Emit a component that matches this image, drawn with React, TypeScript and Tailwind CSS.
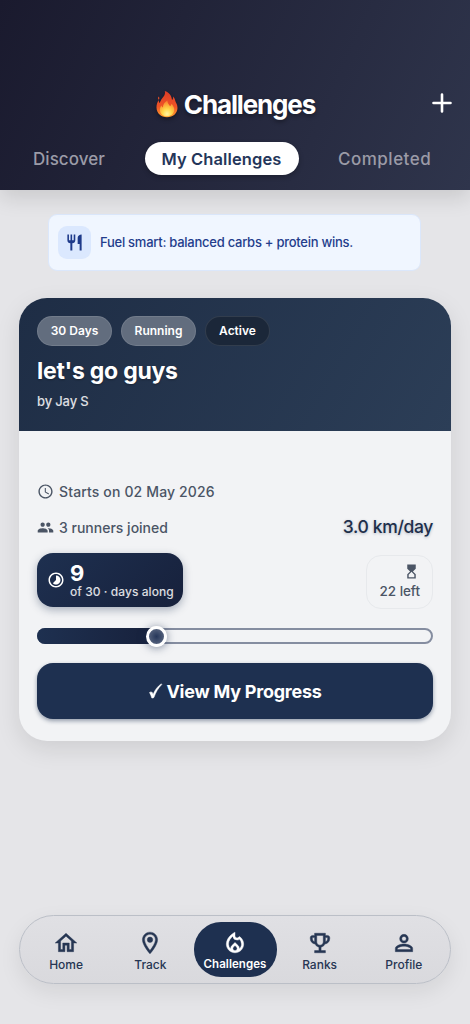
import type { ReactNode } from "react";
import {
  MdAccessTime,
  MdHourglassTop,
  MdOutlineEmojiEvents,
  MdOutlineHome,
  MdOutlineLocalFireDepartment,
  MdOutlineLocationOn,
  MdPeople,
  MdPersonOutline,
  MdRestaurant,
  MdTimelapse,
} from "react-icons/md";

function Flame() {
  return (
    <svg width="24" height="28" viewBox="0 0 24 28" className="shrink-0 drop-shadow-[0_2px_2px_rgba(0,0,0,0.4)]">
      <defs>
        <linearGradient id="outer" x1="0" y1="0" x2="0" y2="1">
          <stop offset="0" stopColor="#dc3c27" />
          <stop offset="0.6" stopColor="#ef5426" />
          <stop offset="1" stopColor="#ffa22e" />
        </linearGradient>
        <radialGradient id="inner" cx="0.5" cy="0.85" r="0.8">
          <stop offset="0" stopColor="#fff3a0" />
          <stop offset="0.4" stopColor="#ffd84a" />
          <stop offset="1" stopColor="#f9822b" />
        </radialGradient>
      </defs>
      <path
        fill="url(#outer)"
        d="M9.800 1c4 1.300 7 4.600 7.200 9 .8-.8 1.300-1.900 1-3.600 1.300 1.200 2 2.600 2.300 4.500.7 2 2.300 3.500 2.200 7.100C22.300 23.500 18 27.200 12 27.200S1.700 23.500 1.500 17.500c-.1-2.900.9-5.200 2.100-7.500.1 1.300.4 2.300 1.200 3C5.400 10.500 7 8.800 8.600 6.600 9.900 4.800 10.400 3 9.800 1z"
      />
      <path fill="#ee5128" d="M3.600 6.500c.9 1.100 1 2.200.2 3.300-.9-.9-1-2-.2-3.300z" />
      <path
        fill="url(#inner)"
        d="M12.300 10.500c.3 2.700 1.400 4.300 2.900 5.700.8-.6 1.200-1.400 1.200-2.400 2 2.100 3.100 4.100 2.800 6.500-.5 3.800-3.200 6-7.100 6s-6.900-2.300-7.200-6.100c-.1-2 .5-3.500 1.500-4.800.2 1.100.7 1.800 1.500 2.200 0-3.100 1.600-5.400 4.400-7.100z"
      />
    </svg>
  );
}

function Chip({ children, className }: { children: ReactNode; className: string }) {
  return (
    <span className={`flex h-[30px] items-center justify-center rounded-full border text-[12px] font-semibold text-white ${className}`}>
      {children}
    </span>
  );
}

function NavItem({ icon, label, active }: { icon: ReactNode; label: string; active?: boolean }) {
  return (
    <button
      className={`flex h-[55px] flex-col items-center rounded-[27px] pt-[8px] text-[12px] leading-[15px] whitespace-nowrap ${
        active ? "mx-px w-[83px] bg-[#1e3050] font-semibold text-white" : "flex-1 font-medium text-[#263653]"
      }`}
    >
      <span className="text-[26px] leading-none [&_path[fill=none]]:hidden [&_svg]:[stroke-width:0.4px]">{icon}</span>
      <span className={active ? "relative top-px tracking-[0.050px] text-[11.500px]" : "relative top-px"}>{label}</span>
    </button>
  );
}

export default function App() {
  return (
    <div className="flex h-[1024px] w-[470px] flex-col overflow-hidden bg-[#e5e5e8] font-['Inter','Liberation_Sans',sans-serif]">
      <header className="relative flex h-[190px] shrink-0 flex-col bg-linear-115 from-[#1a1a2e] to-[#2f354c] shadow-[0_8px_20px_rgba(0,0,0,0.12)]">
        <div className="mt-[84px] flex h-10 items-center justify-center">
          <div className="flex items-center gap-[5px]">
            <Flame />
            <h1 className="text-[26px] font-bold tracking-[-1.150px] text-white [text-shadow:0_2px_4px_rgba(0,0,0,0.4)]">Challenges</h1>
          </div>
          <button aria-label="Add challenge" className="absolute top-[93px] right-[18px]">
            <svg width="20" height="20" viewBox="0 0 20 20" fill="none" stroke="white" strokeWidth="2.600" strokeLinecap="round">
              <path d="M10 1.500v17M1.500 10h17" />
            </svg>
          </button>
        </div>
        <nav className="mt-[18px] flex h-[33px] items-center justify-between pr-[39px] pl-[33px] text-[17px]">
          <button className="w-[72px] pt-[2px] text-left font-medium tracking-[0.050px] whitespace-nowrap text-[#9b9ba7]">Discover</button>
          <button className="h-[33px] w-[154px] rounded-full bg-white pt-px text-[16.500px] font-semibold tracking-[0.1px] text-[#24365a] shadow-[0_2px_5px_rgba(0,0,0,0.25)]">My Challenges</button>
          <button className="w-[93px] pt-[2px] text-left font-medium tracking-[0.500px] whitespace-nowrap text-[#9b9ba7]">Completed</button>
        </nav>
      </header>

      <main className="flex flex-1 flex-col px-[19px] pt-[24px]">
        <section className="mr-[30px] ml-[29px] flex h-[57px] items-center gap-[9px] rounded-[9px] border border-[#dbe7fb] bg-[#f0f6ff] px-[9px]">
          <span className="flex size-[33px] items-center justify-center rounded-[9px] bg-[#dbe8fe] text-[19px] text-[#1e3a8a]">
            <MdRestaurant />
          </span>
          <p className="pt-px text-[13px] font-medium tracking-[-0.260px] whitespace-nowrap text-[#233d8c]">Fuel smart: balanced carbs + protein wins.</p>
        </section>

        <article className="mt-[27px] flex h-[443px] flex-col overflow-hidden rounded-[28px] bg-[#f2f3f5] shadow-[0_8px_24px_rgba(0,0,0,0.1)]">
          <div className="h-[133px] bg-linear-120 from-[#1e2d45] to-[#2c3e57] px-[18px] pt-[18px] text-white">
            <div className="flex gap-[9px]">
              <Chip className="w-[75px] border-white/10 bg-[#626d7e]">30 Days</Chip>
              <Chip className="w-[75px] border-white/10 bg-[#626d7e]">Running</Chip>
              <Chip className="w-[65px] border-white/10 bg-[#1b2739]">Active</Chip>
            </div>
            <h2 className="mt-[10px] text-[23px] leading-[30px] font-bold tracking-[-0.250px] [text-shadow:0_1px_2px_rgba(0,0,0,0.3)]">let's go guys</h2>
            <p className="mt-[6px] text-[13px] leading-[18px] font-medium tracking-[-0.150px] text-white/85">by Jay S</p>
          </div>

          <div className="flex flex-col px-[18px] pt-[50px] text-[#4b5565]">
            <div className="flex h-5 items-center gap-[5px]">
              <MdAccessTime className="size-[17px]" />
              <span className="text-[14px] font-medium tracking-[0.140px]">Starts on 02 May 2026</span>
            </div>
            <div className="mt-[14px] flex h-6 items-center gap-[5px]">
              <MdPeople className="size-[17px]" />
              <span className="text-[14px] font-medium">3 runners joined</span>
              <span className="ml-auto pt-px text-[17.500px] font-medium tracking-[-0.350px] text-[#202e4a] [text-shadow:0_1px_3px_rgba(30,48,80,0.3)]">3.0 km/day</span>
            </div>
            <div className="mt-[14px] flex justify-between">
              <div className="flex h-[54px] w-[146px] items-center gap-[5px] rounded-[16px] bg-linear-135 from-[#1e3050] to-[#17213c] pl-[10px] text-white shadow-[0_3px_9px_rgba(30,48,80,0.35)]">
                <MdTimelapse className="size-[18px] shrink-0" />
                <div className="flex flex-col">
                  <strong className="text-[22px] leading-[23px] font-bold">9</strong>
                  <span className="text-[12px] leading-[14px] font-medium tracking-[0.060px] whitespace-nowrap text-white/85">of 30 · days along</span>
                </div>
              </div>
              <div className="mt-[2px] flex h-[54px] w-[67px] flex-col items-end rounded-[15px] border border-[#e7e9ec] pt-[7px] pr-[12px]">
                <MdHourglassTop className="size-[17px]" />
                <span className="text-[13.500px] leading-[22px] font-medium tracking-[-0.050px] whitespace-nowrap">22 left</span>
              </div>
            </div>
            <div className="relative mt-[19px] h-4 rounded-full border-2 border-[#858da0]">
              <div className="absolute -top-0.5 -left-0.5 h-4 w-[119px] rounded-l-full bg-linear-to-r from-[#1e3050] to-[#17213c]" />
              <div className="absolute -top-[4.500px] left-[106.500px] size-[21px] rounded-full border-[3px] border-white bg-radial from-[#26375a] to-[#667189] shadow-[0_1px_8px_rgba(30,48,80,0.55)]" />
            </div>
            <button className="mt-[19px] flex h-14 items-center justify-center gap-[3px] rounded-[16px] bg-[#1e3050] text-[18px] font-bold text-white shadow-[0_2px_4px_rgba(30,48,80,0.45)]">
              <svg width="15" height="16" viewBox="0 0 14 16" fill="white" stroke="white" strokeWidth="0.500">
                <path d="M1 9.500c1-.8 2.200-.9 2.800.1l.8 1.900C6.400 7 9 3.400 12.800.8l.5.700C9.700 5 7.300 9.300 5.400 14.500c-.7.500-1.400.7-2.100.5C2.700 13 2 11.300 1 9.500z" />
              </svg>
              <span className="tracking-[-0.250px]">View My Progress</span>
            </button>
          </div>
        </article>

        <nav className="mt-auto mb-10 flex h-[69px] items-center rounded-full border border-[#bbbfc7] bg-linear-to-b from-[#e0e0e4] to-[#d9d9dd] px-[4px] shadow-[0_8px_22px_rgba(0,0,0,0.08)]">
          <NavItem icon={<MdOutlineHome />} label="Home" />
          <NavItem icon={<MdOutlineLocationOn />} label="Track" />
          <NavItem icon={<MdOutlineLocalFireDepartment />} label="Challenges" active />
          <NavItem icon={<MdOutlineEmojiEvents />} label="Ranks" />
          <NavItem icon={<MdPersonOutline />} label="Profile" />
        </nav>
      </main>
    </div>
  );
}
